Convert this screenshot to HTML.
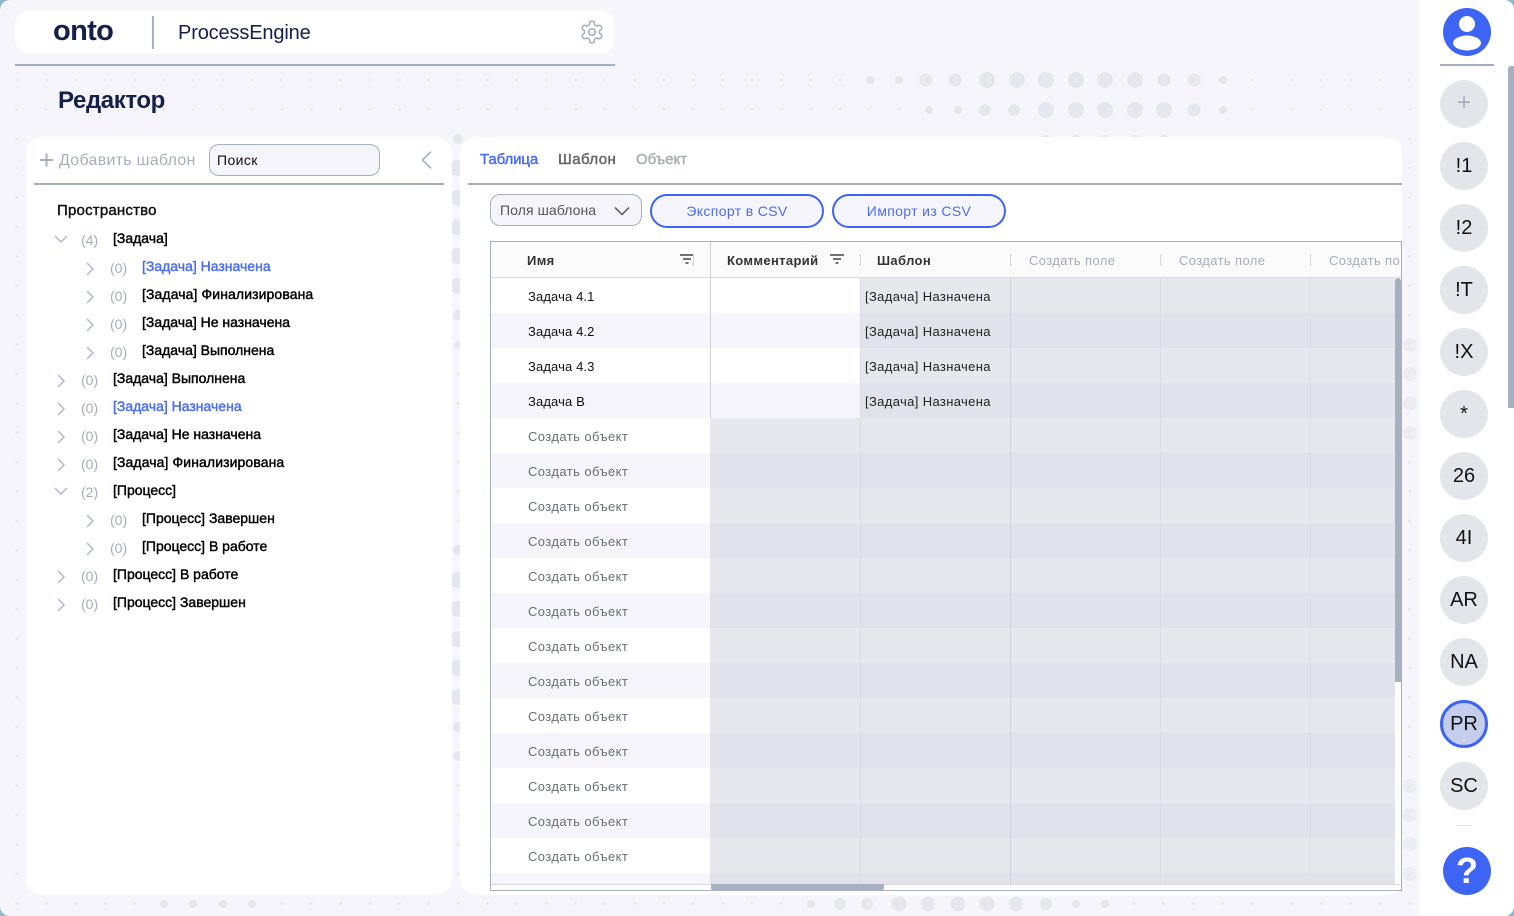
<!DOCTYPE html>
<html lang="ru">
<head>
<meta charset="utf-8">
<title>ProcessEngine</title>
<style>
html,body{margin:0;padding:0;width:1514px;height:916px;overflow:hidden;background:#8fb8cc}
*{box-sizing:border-box}
#p{position:relative;width:1514px;height:916px;overflow:hidden;background:#f5f5fb;border-radius:10px;font-family:"Liberation Sans",sans-serif;color:#000}
#p div,#p span.a,#p svg{position:absolute}
.t{white-space:nowrap;position:absolute}
.w{background:#fff;border-radius:16px}
.tr{font-size:14px;line-height:20px;-webkit-text-stroke:.42px currentColor;white-space:nowrap;position:absolute}
.c{font-size:14px;line-height:20px;color:#a6adbb;white-space:nowrap;position:absolute}
.b{color:#4a6cf7}
.rt{font-size:13px;line-height:20px;white-space:nowrap;position:absolute;letter-spacing:.35px}
.cr{left:528px;color:#6a6e78;letter-spacing:.42px}
.n{left:528px;color:#111;letter-spacing:.12px}
.s{left:865px;color:#222;letter-spacing:.36px}
.o{left:1440px;width:48px;height:48px;border-radius:50%;background:#e3e5eb;text-align:center;font-size:20px;line-height:48px;color:#111}
.h{font-size:13px;line-height:20px;top:251px;white-space:nowrap;position:absolute;font-weight:700;color:#333;letter-spacing:.36px}
.cf{font-size:13px;line-height:20px;top:251px;white-space:nowrap;position:absolute;color:#a6adbc;letter-spacing:.38px}
.sp{width:1px;height:12px;top:254px;background:#d5d7dc}
.vl{width:1px;background:#dcdde3}
.btn{top:194px;height:34px;width:174px;border:2px solid #3d64f5;border-radius:17px;background:#f5f5fb;color:#4a6cf7;font-size:14px;line-height:30px;text-align:center;letter-spacing:.36px}
.tab{font-size:15px;line-height:20px;top:150px;-webkit-text-stroke:.45px currentColor;white-space:nowrap;position:absolute}
</style>
</head>
<body>
<div id="p">
<svg width="1420" height="916" style="left:0;top:0">
<defs>
<pattern id="d1" x="17" y="80" width="29.4" height="29.4" patternUnits="userSpaceOnUse" patternTransform="translate(-1.5 -1.5)"><circle cx="1.5" cy="1.5" r="1.5" fill="#e8e9f0"/></pattern>
<pattern id="d2" x="1292" y="80" width="29.4" height="29.4" patternUnits="userSpaceOnUse" patternTransform="translate(-1.5 -1.5)"><circle cx="1.5" cy="1.5" r="1.5" fill="#e8e9f0"/></pattern>
</defs>
<rect x="0" y="70" width="1270" height="846" fill="url(#d1)"/>
<rect x="1280" y="70" width="140" height="846" fill="url(#d2)"/>
<g fill="#e6e7ee">
<circle cx="870" cy="80" r="4.5"/><circle cx="899" cy="80" r="4"/><circle cx="926" cy="80" r="6.5"/><circle cx="955" cy="80" r="6.5"/><circle cx="987" cy="80" r="8"/><circle cx="1017" cy="80" r="8"/><circle cx="1046" cy="80" r="8"/><circle cx="1076" cy="80" r="8"/><circle cx="1105" cy="80" r="8"/><circle cx="1135" cy="80" r="8"/><circle cx="1164" cy="80" r="6.5"/><circle cx="1194" cy="80" r="6.5"/><circle cx="1223" cy="80" r="4"/>
<circle cx="929" cy="110" r="4"/><circle cx="958" cy="110" r="4"/><circle cx="985" cy="110" r="6"/><circle cx="1014" cy="110" r="6"/><circle cx="1046" cy="110" r="8"/><circle cx="1076" cy="110" r="8"/><circle cx="1105" cy="110" r="8"/><circle cx="1135" cy="110" r="8"/><circle cx="1164" cy="110" r="8"/><circle cx="1194" cy="110" r="6.5"/><circle cx="1223" cy="110" r="4"/>
<circle cx="1046" cy="141" r="6"/><circle cx="1076" cy="141" r="6"/><circle cx="1105" cy="141" r="6"/><circle cx="1135" cy="141" r="6"/><circle cx="1164" cy="141" r="6"/>
<circle cx="458" cy="139" r="5"/><circle cx="458" cy="168" r="8"/><circle cx="458" cy="198" r="8"/><circle cx="458" cy="227" r="8"/><circle cx="458" cy="256" r="8"/><circle cx="458" cy="286" r="8"/><circle cx="458" cy="315" r="5"/><circle cx="458" cy="345" r="4"/>
<circle cx="458" cy="550" r="5"/><circle cx="458" cy="580" r="8"/><circle cx="458" cy="609" r="8"/><circle cx="458" cy="639" r="8"/><circle cx="458" cy="668" r="8"/><circle cx="458" cy="697" r="8"/><circle cx="458" cy="727" r="5"/><circle cx="458" cy="756" r="5"/>
<g fill="#ecedf3"><circle cx="1410" cy="345" r="7"/><circle cx="1410" cy="374" r="7"/><circle cx="1410" cy="403" r="7"/><circle cx="1410" cy="433" r="7"/><circle cx="1410" cy="786" r="7"/><circle cx="1410" cy="815" r="7"/><circle cx="1410" cy="844" r="7"/><circle cx="1410" cy="874" r="7"/></g>
<circle cx="164" cy="904" r="4"/><circle cx="193" cy="904" r="4"/><circle cx="223" cy="904" r="4"/><circle cx="252" cy="904" r="4"/><circle cx="811" cy="904" r="4"/><circle cx="840" cy="904" r="6"/><circle cx="867" cy="904" r="6"/><circle cx="899" cy="904" r="7.5"/><circle cx="928" cy="904" r="7.5"/><circle cx="958" cy="904" r="7.5"/><circle cx="987" cy="904" r="7.5"/><circle cx="1016" cy="904" r="7.5"/><circle cx="1046" cy="904" r="6"/><circle cx="1076" cy="904" r="4"/><circle cx="1105" cy="904" r="4"/>
</g>
</svg>

<!-- header -->
<div class="w" style="left:15px;top:10px;width:600px;height:44px"></div>
<div style="left:15px;top:64px;width:600px;height:2px;background:#a6b0c4"></div>
<span class="t" style="left:53px;top:14px;font-size:29px;line-height:34px;font-weight:700;color:#14204a;letter-spacing:-.65px">onto</span>
<div style="left:152px;top:16px;width:2px;height:33px;background:#a6b0c4"></div>
<span class="t" style="left:178px;top:21px;font-size:20px;line-height:24px;color:#14204a;letter-spacing:-.15px">ProcessEngine</span>
<svg width="26" height="26" viewBox="0 0 24 24" style="left:579px;top:19px" fill="none" stroke="#a6b0c0" stroke-width="1.5" stroke-linecap="round" stroke-linejoin="round"><path d="M12.22 2h-.44a2 2 0 0 0-2 2v.18a2 2 0 0 1-1 1.73l-.43.25a2 2 0 0 1-2 0l-.15-.08a2 2 0 0 0-2.73.73l-.22.38a2 2 0 0 0 .73 2.73l.15.1a2 2 0 0 1 1 1.72v.51a2 2 0 0 1-1 1.74l-.15.09a2 2 0 0 0-.73 2.73l.22.38a2 2 0 0 0 2.73.73l.15-.08a2 2 0 0 1 2 0l.43.25a2 2 0 0 1 1 1.73V20a2 2 0 0 0 2 2h.44a2 2 0 0 0 2-2v-.18a2 2 0 0 1 1-1.73l.43-.25a2 2 0 0 1 2 0l.15.08a2 2 0 0 0 2.73-.73l.22-.39a2 2 0 0 0-.73-2.73l-.15-.08a2 2 0 0 1-1-1.74v-.5a2 2 0 0 1 1-1.74l.15-.09a2 2 0 0 0 .73-2.73l-.22-.38a2 2 0 0 0-2.73-.73l-.15.08a2 2 0 0 1-2 0l-.43-.25a2 2 0 0 1-1-1.73V4a2 2 0 0 0-2-2z"/><circle cx="12" cy="12" r="3"/></svg>
<span class="t" style="left:58px;top:87px;font-size:24px;line-height:28px;font-weight:700;color:#14204a;letter-spacing:-.4px">Редактор</span>

<!-- left panel -->
<div class="w" style="left:26px;top:137px;width:426px;height:758px"></div>
<div style="left:34px;top:183px;width:410px;height:2px;background:#a6b0c4"></div>
<svg width="14" height="14" style="left:40px;top:153px" fill="none" stroke="#a8b0be" stroke-width="2"><path d="M6.500 0.500V13.500M0 7H13"/></svg>
<span class="t" style="left:59px;top:151px;font-size:16px;line-height:20px;color:#a8b0be;letter-spacing:.27px">Добавить шаблон</span>
<div style="left:209px;top:144px;width:171px;height:32px;border:1px solid #a6b0c4;border-radius:10px;background:#f5f5fb"></div>
<span class="t" style="left:217px;top:150px;font-size:14px;line-height:20px;color:#111;letter-spacing:.4px">Поиск</span>
<svg width="14" height="20" style="left:420px;top:150px" fill="none" stroke="#a6b0c0" stroke-width="1.600"><path d="M11 1.500L2.500 10L11 18.500"/></svg>

<span class="tr" style="left:57px;top:201px;color:#111;font-size:15px;letter-spacing:.2px">Пространство</span>

<svg width="60" height="400" style="left:51px;top:225px" fill="none" stroke="#b3bac6" stroke-width="1.500">
<path d="M4 11L10 17L16 11"/>
<path d="M36 38L42 44L36 50M36 66L42 72L36 78M36 94L42 100L36 106M36 122L42 128L36 134"/>
<path d="M7 150L13 156L7 162M7 178L13 184L7 190M7 206L13 212L7 218M7 234L13 240L7 246"/>
<path d="M4 263L10 269L16 263"/>
<path d="M36 290L42 296L36 302M36 318L42 324L36 330"/>
<path d="M7 346L13 352L7 358M7 374L13 380L7 386"/>
</svg>

<span class="c" style="left:81px;top:230px">(4)</span><span class="tr" style="left:113px;top:228px">[Задача]</span>
<span class="c" style="left:110px;top:258px">(0)</span><span class="tr b" style="left:142px;top:256px">[Задача] Назначена</span>
<span class="c" style="left:110px;top:286px">(0)</span><span class="tr" style="left:142px;top:284px;letter-spacing:.1px">[Задача] Финализирована</span>
<span class="c" style="left:110px;top:314px">(0)</span><span class="tr" style="left:142px;top:312px">[Задача] Не назначена</span>
<span class="c" style="left:110px;top:342px">(0)</span><span class="tr" style="left:142px;top:340px">[Задача] Выполнена</span>
<span class="c" style="left:81px;top:370px">(0)</span><span class="tr" style="left:113px;top:368px">[Задача] Выполнена</span>
<span class="c" style="left:81px;top:398px">(0)</span><span class="tr b" style="left:113px;top:396px">[Задача] Назначена</span>
<span class="c" style="left:81px;top:426px">(0)</span><span class="tr" style="left:113px;top:424px">[Задача] Не назначена</span>
<span class="c" style="left:81px;top:454px">(0)</span><span class="tr" style="left:113px;top:452px;letter-spacing:.1px">[Задача] Финализирована</span>
<span class="c" style="left:81px;top:482px">(2)</span><span class="tr" style="left:113px;top:480px">[Процесс]</span>
<span class="c" style="left:110px;top:510px">(0)</span><span class="tr" style="left:142px;top:508px">[Процесс] Завершен</span>
<span class="c" style="left:110px;top:538px">(0)</span><span class="tr" style="left:142px;top:536px">[Процесс] В работе</span>
<span class="c" style="left:81px;top:566px">(0)</span><span class="tr" style="left:113px;top:564px">[Процесс] В работе</span>
<span class="c" style="left:81px;top:594px">(0)</span><span class="tr" style="left:113px;top:592px">[Процесс] Завершен</span>

<!-- right panel -->
<div class="w" style="left:460px;top:137px;width:942px;height:758px"></div>
<div style="left:468px;top:183px;width:934px;height:2px;background:#a6b4bc"></div>
<span class="tab b" style="left:480px;letter-spacing:-.1px">Таблица</span>
<span class="tab" style="left:558px;color:#666;letter-spacing:.45px">Шаблон</span>
<span class="tab" style="left:636px;color:#a8acb4">Объект</span>

<div style="left:490px;top:194px;width:152px;height:32px;border:1px solid #a6b0c4;border-radius:10px;background:#f5f5fb"></div>
<span class="t" style="left:500px;top:200px;font-size:14px;line-height:20px;color:#555;letter-spacing:.08px">Поля шаблона</span>
<svg width="16" height="10" style="left:614px;top:206px" fill="none" stroke="#555" stroke-width="1.500"><path d="M1 1.500L8 8.500L15 1.500"/></svg>
<div class="btn" style="left:650px">Экспорт в CSV</div>
<div class="btn" style="left:832px">Импорт из CSV</div>

<!-- table -->
<div style="left:490px;top:241px;width:912px;height:650px;border:1px solid #a6b0c0;background:#fff"></div>
<div style="left:491px;top:242px;width:910px;height:35px;background:#fbfbfc"></div>
<div style="left:491px;top:277px;width:910px;height:1px;background:#d8dae0"></div>
<div style="left:491px;top:278px;width:219px;height:606px;background:repeating-linear-gradient(#fff 0 35px,#f5f5fb 35px 70px)"></div>
<div style="left:710px;top:278px;width:150px;height:140px;background:repeating-linear-gradient(#fff 0 35px,#f5f5fb 35px 70px)"></div>
<div style="left:710px;top:418px;width:685px;height:466px;background:repeating-linear-gradient(#e7e8ed 0 35px,#e2e3ea 35px 70px)"></div>
<div style="left:860px;top:278px;width:535px;height:140px;background:repeating-linear-gradient(#e7e8ed 0 35px,#e2e3ea 35px 70px)"></div>
<div class="vl" style="left:710px;top:242px;height:176px;background:#cfd2d8"></div>
<div class="vl" style="left:860px;top:278px;height:606px"></div>
<div class="vl" style="left:1010px;top:278px;height:606px;background:#cfd2d8"></div>
<div class="vl" style="left:1160px;top:278px;height:606px"></div>
<div class="vl" style="left:1310px;top:278px;height:606px"></div>
<div style="left:491px;top:884px;width:910px;height:1px;background:#d8dae0"></div>
<div style="left:1395px;top:278px;width:6px;height:404px;background:#a6b0c0;border-radius:3px 3px 0 0"></div>
<div style="left:711px;top:884px;width:173px;height:6px;background:#a6b0c0;border-radius:0 0 2px 2px"></div>

<span class="h" style="left:527px">Имя</span>
<svg width="14" height="10" style="left:680px;top:254px" fill="none" stroke="#444" stroke-width="1.500"><path d="M0 1H14M3 5H11M5.500 9H8.500"/></svg>
<div class="sp" style="left:693px"></div>
<span class="h" style="left:727px">Комментарий</span>
<svg width="14" height="10" style="left:830px;top:254px" fill="none" stroke="#444" stroke-width="1.500"><path d="M0 1H14M3 5H11M5.500 9H8.500"/></svg>
<div class="sp" style="left:860px"></div>
<span class="h" style="left:877px">Шаблон</span>
<div class="sp" style="left:1010px"></div>
<span class="cf" style="left:1029px">Создать поле</span>
<div class="sp" style="left:1160px"></div>
<span class="cf" style="left:1179px">Создать поле</span>
<div class="sp" style="left:1310px"></div>
<div style="left:1329px;top:251px;width:71px;height:20px;overflow:hidden"><span class="cf" style="left:0;top:0">Создать поле</span></div>

<span class="rt n" style="top:287px">Задача 4.1</span><span class="rt s" style="top:287px">[Задача] Назначена</span>
<span class="rt n" style="top:322px">Задача 4.2</span><span class="rt s" style="top:322px">[Задача] Назначена</span>
<span class="rt n" style="top:357px">Задача 4.3</span><span class="rt s" style="top:357px">[Задача] Назначена</span>
<span class="rt n" style="top:392px">Задача B</span><span class="rt s" style="top:392px">[Задача] Назначена</span>
<span class="rt cr" style="top:427px">Создать объект</span>
<span class="rt cr" style="top:462px">Создать объект</span>
<span class="rt cr" style="top:497px">Создать объект</span>
<span class="rt cr" style="top:532px">Создать объект</span>
<span class="rt cr" style="top:567px">Создать объект</span>
<span class="rt cr" style="top:602px">Создать объект</span>
<span class="rt cr" style="top:637px">Создать объект</span>
<span class="rt cr" style="top:672px">Создать объект</span>
<span class="rt cr" style="top:707px">Создать объект</span>
<span class="rt cr" style="top:742px">Создать объект</span>
<span class="rt cr" style="top:777px">Создать объект</span>
<span class="rt cr" style="top:812px">Создать объект</span>
<span class="rt cr" style="top:847px">Создать объект</span>

<!-- sidebar -->
<div style="left:1420px;top:0;width:94px;height:916px;background:#fff"></div>
<svg width="48" height="48" style="left:1443px;top:8px"><circle cx="24" cy="24" r="24" fill="#3d64f5"/><circle cx="24" cy="16" r="8" fill="#fff"/><ellipse cx="24" cy="35" rx="14" ry="7.500" fill="#fff"/></svg>
<div style="left:1440px;top:64px;width:54px;height:2px;background:#a6adc0"></div>
<div style="left:1508px;top:66px;width:6px;height:342px;background:#a6b0c0;border-radius:3px 0 0 0"></div>

<div class="o" style="top:80px;color:#a6b0c0;font-size:24px;line-height:46px">+</div>
<div class="o" style="top:142px">!1</div>
<div class="o" style="top:204px">!2</div>
<div class="o" style="top:266px">!T</div>
<div class="o" style="top:328px">!X</div>
<div class="o" style="top:390px">*</div>
<div class="o" style="top:452px">26</div>
<div class="o" style="top:514px">4I</div>
<div class="o" style="top:576px">AR</div>
<div class="o" style="top:638px">NA</div>
<div class="o" style="top:700px;background:#c5cdec;border:3px solid #3d64f5;line-height:42px">PR</div>
<div class="o" style="top:762px">SC</div>
<div style="left:1456px;top:825px;width:16px;height:1px;background:#e3e5eb"></div>
<div style="left:1443px;top:847px;width:48px;height:48px;border-radius:50%;background:#3d64f5;color:#fff;text-align:center;font-size:36px;line-height:48px;font-weight:700">?</div>
</div>
</body>
</html>
